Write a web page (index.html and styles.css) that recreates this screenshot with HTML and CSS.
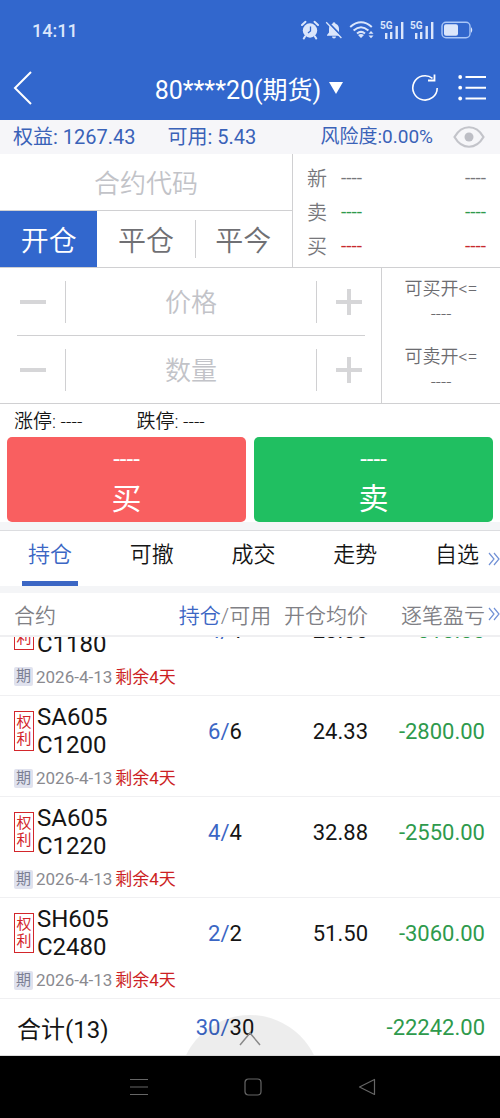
FILE: index.html
```html
<!DOCTYPE html>
<html lang="zh-CN">
<head>
<meta charset="utf-8">
<meta name="viewport" content="width=device-width, initial-scale=1">
<title>期货交易</title>
<link rel="stylesheet" href="styles.css">
</head>
<body>
<div class="app">
  <header class="top">
    <div class="status">
      <time class="clock">14:11</time>
      <div class="status-icons">
        <svg width="18" height="20" viewBox="0 0 18 20"><circle cx="9" cy="10.500" r="7.200" fill="#dbe6fb"/><path d="M1 5 L4.500 1.800 M17 5 L13.500 1.800 M4 16.500 L2.800 18.500 M14 16.500 L15.200 18.500" stroke="#dbe6fb" stroke-width="2" stroke-linecap="round"/><path d="M9.500 6.500 V11 L7 13" fill="none" stroke="#3267cd" stroke-width="1.300"/></svg>
        <svg width="18" height="20" viewBox="0 0 18 20"><path d="M9 2.200 a1.500 1.500 0 0 1 1.500 1.500 C13 4.500 14 6.500 14 9 V12.500 L16 15 V15.800 H2 V15 L4 12.500 V9 C4 6.500 5 4.500 7.500 3.700 A1.500 1.500 0 0 1 9 2.200Z M7 16.500 H11 A2 2 0 0 1 7 16.500Z" fill="#dbe6fb"/><path d="M2.500 1.800 L17.500 17.200" stroke="#3267cd" stroke-width="2"/><path d="M1.200 2.200 L16.400 18" stroke="#dbe6fb" stroke-width="1.300"/></svg>
        <svg width="25" height="20" viewBox="0 0 25 20"><g fill="none" stroke="#dbe6fb" stroke-width="2"><path d="M1.200 7 Q12 -2.500 22.800 7"/><path d="M4.600 10.500 Q12 4 19.400 10.500"/><path d="M8 13.600 Q12 10.200 16 13.600"/></g><path d="M9 15 Q12 12.800 15 15 L12 18Z M19.500 13.800 L22 11 L24.500 13.800Z M19.500 15.400 H24.500 L22 18.200Z" fill="#dbe6fb"/></svg>
        <svg width="24" height="20" viewBox="0 0 24 20"><g fill="#dbe6fb"><path d="M5 13h2.400v6H5zM10 12h2.400v7H10zM15.500 6h2.400v13h-2.400zM21 2h2.400v17H21z"/><text x="0" y="9" class="net">5G</text></g></svg>
        <svg width="24" height="20" viewBox="0 0 24 20"><g fill="#dbe6fb"><path d="M5 13h2.400v6H5zM10 12h2.400v7H10zM15.500 6h2.400v13h-2.400zM21 2h2.400v17H21z"/><text x="0" y="9" class="net">5G</text></g></svg>
        <svg class="battery" width="32" height="18" viewBox="0 0 32 18"><rect x="1" y="1.200" width="28" height="15.600" rx="4" fill="none" stroke="#a9c6f7" stroke-width="1.400"/><rect x="3" y="3.200" width="14" height="11.600" rx="2" fill="#dbe6fb"/><path d="M30 6 Q32.500 9 30 12Z" fill="#dbe6fb"/></svg>
      </div>
    </div>
    <nav class="titlebar">
      <button class="icon-btn" aria-label="返回"><svg width="20" height="36" viewBox="0 0 20 36"><path d="M18 2 L2 18 L18 34" fill="none" stroke="#fff" stroke-width="2"/></svg></button>
      <button class="account">80****20(期货)<svg width="16" height="12" viewBox="0 0 16 12"><path d="M1 0H15L8 12Z" fill="#fff"/></svg></button>
      <div class="actions">
        <button class="icon-btn" aria-label="刷新"><svg width="28" height="30" viewBox="0 0 28 30"><path d="M21.500 5.300 A12.200 12.200 0 1 0 26.200 15" fill="none" stroke="#fff" stroke-width="1.600"/><path d="M23.500 1.500 V7.500 H17" fill="none" stroke="#fff" stroke-width="1.800"/></svg></button>
        <button class="icon-btn" aria-label="菜单"><svg width="28" height="28" viewBox="0 0 28 28"><path d="M7.500 3H28M7.500 13.700H28M7.500 24.500H28" stroke="#fff" stroke-width="2"/><g fill="#fff"><circle cx="2.200" cy="3" r="1.900"/><circle cx="2.200" cy="13.700" r="1.900"/><circle cx="2.200" cy="24.500" r="1.900"/></g></svg></button>
      </div>
    </nav>
  </header>

  <section class="funds">
    <span class="equity">权益: 1267.43</span>
    <span class="free">可用: 5.43</span>
    <span class="risk">风险度:0.00%</span>
    <button class="icon-btn" aria-label="显示资金"><svg width="32" height="22" viewBox="0 0 32 22"><path d="M1.500 11 C9 -2 23 -2 30.500 11 C23 24 9 24 1.500 11Z" fill="none" stroke="#c3c4ca" stroke-width="2.200"/><circle cx="16" cy="11" r="4.500" fill="#bdbec5"/></svg></button>
  </section>

  <section class="contract">
    <div class="contract-left">
      <input class="field code" type="text" placeholder="合约代码" aria-label="合约代码">
      <div class="offset">
        <button class="offset-btn active">开仓</button>
        <button class="offset-btn">平仓</button>
        <button class="offset-btn split">平今</button>
      </div>
    </div>
    <div class="quotes">
      <div class="quote"><span class="quote-name">新</span><span>----</span><span class="quote-vol">----</span></div>
      <div class="quote green"><span class="quote-name">卖</span><span>----</span><span class="quote-vol">----</span></div>
      <div class="quote red"><span class="quote-name">买</span><span>----</span><span class="quote-vol">----</span></div>
    </div>
  </section>

  <section class="order">
    <div class="steppers">
      <div class="stepper">
        <button class="step" aria-label="减价"><svg width="26" height="26" viewBox="0 0 26 26"><path d="M0 13H26" stroke="#d6d6d8" stroke-width="4"/></svg></button>
        <input class="field amount" type="text" placeholder="价格" aria-label="价格">
        <button class="step" aria-label="加价"><svg width="26" height="26" viewBox="0 0 26 26"><path d="M0 13H26M13 0V26" stroke="#d6d6d8" stroke-width="4"/></svg></button>
      </div>
      <div class="stepper">
        <button class="step" aria-label="减量"><svg width="26" height="26" viewBox="0 0 26 26"><path d="M0 13H26" stroke="#d6d6d8" stroke-width="4"/></svg></button>
        <input class="field amount" type="text" placeholder="数量" aria-label="数量">
        <button class="step" aria-label="加量"><svg width="26" height="26" viewBox="0 0 26 26"><path d="M0 13H26M13 0V26" stroke="#d6d6d8" stroke-width="4"/></svg></button>
      </div>
    </div>
    <div class="capacity">
      <div class="cap"><span>可买开&lt;=</span><span>----</span></div>
      <div class="cap"><span>可卖开&lt;=</span><span>----</span></div>
    </div>
  </section>

  <section class="limits"><span class="limit">涨停: ----</span><span class="limit">跌停: ----</span></section>

  <section class="trade">
    <button class="trade-btn buy"><span class="trade-price">----</span><span>买</span></button>
    <button class="trade-btn sell"><span class="trade-price">----</span><span>卖</span></button>
  </section>

  <nav class="tabs">
    <button class="tab current">持仓</button>
    <button class="tab">可撤</button>
    <button class="tab">成交</button>
    <button class="tab">走势</button>
    <button class="tab">自选</button>
    <svg class="more" width="12" height="14" viewBox="0 0 12 14"><path d="M1 1L6 7L1 13M6 1L11 7L6 13" fill="none" stroke="#7191d6" stroke-width="1.200"/></svg>
  </nav>

  <div class="table-head">
    <table class="grid">
      <thead><tr><th class="c-name">合约</th><th class="c-pos"><span class="blue">持仓</span>/可用</th><th class="c-avg">开仓均价</th><th class="c-pl">逐笔盈亏</th></tr></thead>
    </table>
    <svg class="more" width="12" height="14" viewBox="0 0 12 14"><path d="M1 1L6 7L1 13M6 1L11 7L6 13" fill="none" stroke="#7191d6" stroke-width="1.200"/></svg>
  </div>
  <div class="positions">
    <table class="grid body">
      <tbody>
        <tr><td class="c-name"><div class="inst"><span class="right-tag">权<br>利</span><span>SA605<br>C1180</span></div><div class="expiry"><span class="tag">期</span><span>2026-4-13</span><span class="left">剩余4天</span></div></td><td class="c-pos"><span class="blue">4/</span>4</td><td class="c-avg">28.00</td><td class="c-pl">-310.00</td></tr>
        <tr><td class="c-name"><div class="inst"><span class="right-tag">权<br>利</span><span>SA605<br>C1200</span></div><div class="expiry"><span class="tag">期</span><span>2026-4-13</span><span class="left">剩余4天</span></div></td><td class="c-pos"><span class="blue">6/</span>6</td><td class="c-avg">24.33</td><td class="c-pl">-2800.00</td></tr>
        <tr><td class="c-name"><div class="inst"><span class="right-tag">权<br>利</span><span>SA605<br>C1220</span></div><div class="expiry"><span class="tag">期</span><span>2026-4-13</span><span class="left">剩余4天</span></div></td><td class="c-pos"><span class="blue">4/</span>4</td><td class="c-avg">32.88</td><td class="c-pl">-2550.00</td></tr>
        <tr><td class="c-name"><div class="inst"><span class="right-tag">权<br>利</span><span>SH605<br>C2480</span></div><div class="expiry"><span class="tag">期</span><span>2026-4-13</span><span class="left">剩余4天</span></div></td><td class="c-pos"><span class="blue">2/</span>2</td><td class="c-avg">51.50</td><td class="c-pl">-3060.00</td></tr>
      </tbody>
    </table>
  </div>
  <div class="total">
    <table class="grid">
      <tbody><tr><td class="c-name">合计(13)</td><td class="c-pos"><span class="blue">30/</span>30</td><td class="c-avg"></td><td class="c-pl">-22242.00</td></tr></tbody>
    </table>
    <button class="expand" aria-label="展开"><svg width="130" height="41" viewBox="0 0 130 41"><circle cx="65" cy="72" r="71" fill="#000" fill-opacity="0.070"/><path d="M55 31L65 19L75 31" fill="none" stroke="#8a8a8a" stroke-width="1.500"/></svg></button>
  </div>

  <nav class="sysbar">
    <button class="icon-btn" aria-label="最近任务"><svg width="18" height="18" viewBox="0 0 18 18"><path d="M0 1.500H18M0 9H18M0 16.500H18" stroke="#666" stroke-width="1.200"/></svg></button>
    <button class="icon-btn" aria-label="主屏幕"><svg width="18" height="18" viewBox="0 0 18 18"><rect x="1" y="1" width="16" height="16" rx="3.500" fill="none" stroke="#666" stroke-width="1.200"/></svg></button>
    <button class="icon-btn" aria-label="返回上一页"><svg width="18" height="18" viewBox="0 0 18 18"><path d="M16.500 1.500V16.500L1.500 9Z" fill="none" stroke="#666" stroke-width="1.200" stroke-linejoin="round"/></svg></button>
  </nav>
</div>
</body>
</html>
```

FILE: styles.css
```css
* { box-sizing: border-box; }

body {
  margin: 0;
  background: #fff;
  color: #151515;
  font-family: Roboto, "Noto Sans CJK SC", sans-serif;
}

button, input {
  margin: 0;
  padding: 0;
  border: 0;
  background: none;
  color: inherit;
  font: inherit;
}

button { cursor: pointer; }
svg { display: block; }

.app {
  display: flex;
  flex-direction: column;
  height: 100vh;
  min-height: 900px;
}

.app > * { flex: none; }

.icon-btn { display: flex; }

/* Status and title */
.top { background: #3267cd; color: #fff; }

.status {
  display: flex;
  align-items: center;
  justify-content: space-between;
  height: 60px;
  padding: 0 27px 0 32px;
}

.clock { color: #dbe6fb; font-size: 18px; font-weight: 500; }
.status-icons { display: flex; align-items: center; gap: 6px; }
.battery { margin-left: 1px; }
.net { font-size: 10px; font-weight: 700; }

.titlebar {
  display: grid;
  grid-template-columns: 1fr auto 1fr;
  align-items: center;
  height: 60px;
  padding: 0 14px 4px 13px;
}

.account {
  display: flex;
  align-items: center;
  gap: 7px;
  font-size: 25px;
}

.actions {
  display: flex;
  align-items: center;
  justify-content: flex-end;
  gap: 19px;
}

/* Funds */
.funds {
  display: flex;
  align-items: center;
  height: 34px;
  padding: 0 15px 0 13px;
  background: #f6f6f9;
  color: #3a62b8;
  font-size: 20px;
  line-height: 32px;
  white-space: nowrap;
}

.free { margin-left: 32px; }
.risk { margin-left: auto; margin-right: 20px; font-size: 19px; }

/* Contract and quotes */
.contract {
  display: grid;
  grid-template-columns: 293fr 207fr;
  border-bottom: 1px solid #d0d0d2;
}

.contract-left { border-right: 1px solid #d0d0d2; }

.field {
  display: block;
  width: 100%;
  min-width: 0;
  text-align: center;
  font-size: 26px;
  font-weight: 350;
  outline: 0;
}

.field::placeholder { color: #c2c3c8; opacity: 1; }
.code { height: 57px; padding-top: 3px; border-bottom: 1px solid #d0d0d2; }

.offset { display: grid; grid-template-columns: repeat(3, 1fr); height: 56px; }
.offset-btn { color: #707074; font-size: 28px; font-weight: 350; }
.offset-btn.active { background: #3267cd; color: #fff; }

.offset-btn.split {
  background: linear-gradient(#d0d0d2, #d0d0d2) left center / 1px 38px no-repeat;
}

.quotes { padding: 6px 14px 0 14px; }

.quote {
  display: flex;
  align-items: center;
  height: 34px;
  color: #77777b;
  font-size: 19px;
}

.quote-name { margin-right: 14px; color: #77777b; font-size: 20px; font-weight: 350; }
.quote-vol { margin-left: auto; }
.green { color: #2e9a4c; }
.red { color: #c8292d; }

/* Order entry */
.order {
  display: grid;
  grid-template-columns: 382fr 118fr;
  border-bottom: 1px solid #d0d0d2;
}

.steppers { padding: 0 16px 0 17px; border-right: 1px solid #d0d0d2; }

.stepper {
  display: grid;
  grid-template-columns: 48px 1fr 48px;
  align-items: center;
  height: 67px;
}

.stepper + .stepper { height: 68px; border-top: 1px solid #d0d0d2; }

.step {
  display: flex;
  align-items: center;
  height: 42px;
  padding-left: 3px;
}

.step:last-child { justify-content: flex-end; padding: 0 3px 0 0; }

.amount {
  height: 42px;
  padding-top: 2px;
  border: solid #d0d0d2;
  border-width: 0 1px;
}

.cap {
  display: flex;
  flex-direction: column;
  align-items: center;
  height: 68px;
  padding-top: 8px;
  color: #6c6c70;
  font-size: 18px;
  font-weight: 350;
  line-height: 25px;
}

.cap:last-child { height: 67px; }

.limits {
  display: flex;
  gap: 54px;
  padding: 5px 14px 2px;
  font-size: 19px;
  font-weight: 350;
  line-height: 26px;
}

/* Buy and sell */
.trade {
  position: relative;
  z-index: 1;
  display: grid;
  grid-template-columns: 1fr 1fr;
  gap: 8px;
  padding: 0 7px;
}

.trade-btn {
  display: flex;
  flex-direction: column;
  align-items: center;
  height: 85px;
  padding-top: 4px;
  border-radius: 5px;
  color: #fff;
  font-size: 30px;
  line-height: 44px;
}

.trade-price { font-size: 24px; line-height: 36px; }
.buy { background: #f95f60; }
.sell { background: #20bf61; }

/* Section tabs */
.tabs {
  position: relative;
  display: flex;
  justify-content: space-between;
  margin-top: 8px;
  padding: 0 21px 0 28px;
  border-top: 1px solid #dcdde0;
  background: #fff;
  box-shadow: 0 -8px 0 #f4f5f7, 0 7px 0 #f4f5f7;
}

.tab {
  position: relative;
  height: 55px;
  padding-bottom: 14px;
  font-size: 22px;
  font-weight: 350;
}

.current { color: #3b66c4; }

.current::after {
  content: "";
  position: absolute;
  right: -6px;
  bottom: 0;
  left: -6px;
  height: 5px;
  background: #3b66c4;
}

.more { position: absolute; top: 50%; right: 0; margin-top: -7px; }

/* Positions */
.table-head {
  position: relative;
  margin-top: 7px;
  border-bottom: 2px solid #efeff1;
}

.grid {
  width: 100%;
  border-collapse: collapse;
  table-layout: fixed;
  font-size: 22px;
}

th, td { padding: 0; font-weight: 400; white-space: nowrap; }

th {
  height: 42px;
  color: #808085;
  font-size: 21px;
  font-weight: 350;
}

.c-name { width: 35%; padding-left: 14px; text-align: left; }
.c-pos { width: 20%; text-align: center; }
.c-avg { width: 19%; padding-right: 2px; text-align: right; }
.c-pl { width: 26%; padding-right: 15px; text-align: right; }
td.c-pl { color: #2e9a4c; }
.blue { color: #3b66c4; }

.positions {
  display: flex;
  flex: 1 1 0;
  flex-direction: column;
  justify-content: flex-end;
  min-height: 0;
  overflow: hidden;
}

.body tr { border-bottom: 1px solid #f0f0f2; }

.body td {
  height: 101px;
  padding-top: 7px;
  line-height: 58px;
  vertical-align: top;
}

.inst {
  display: flex;
  align-items: center;
  gap: 3px;
  font-size: 24px;
  line-height: 28px;
}

.right-tag {
  width: 20px;
  padding: 2px 0;
  border: 1px solid #d3262b;
  color: #d3262b;
  font-size: 15px;
  line-height: 17px;
  text-align: center;
}

.expiry {
  display: flex;
  align-items: center;
  gap: 3px;
  margin-top: 7px;
  color: #8a8a8f;
  font-size: 17px;
  line-height: 24px;
}

.tag {
  flex: none;
  width: 19px;
  border-radius: 2px;
  background: #e0e2ee;
  color: #7b7f94;
  font-size: 15px;
  line-height: 19px;
  text-align: center;
}

.left { color: #cc1f24; }

.total { position: relative; border-bottom: 1px solid #dcdcdc; }
.total td { height: 56px; }
.total .c-name { padding-left: 17px; font-size: 24px; }

.expand {
  position: absolute;
  bottom: 0;
  left: 50%;
  margin-left: -65px;
}

/* System navigation */
.sysbar {
  display: flex;
  align-items: center;
  justify-content: center;
  gap: 96px;
  height: 62px;
  padding-left: 6px;
  background: #000;
}
```
